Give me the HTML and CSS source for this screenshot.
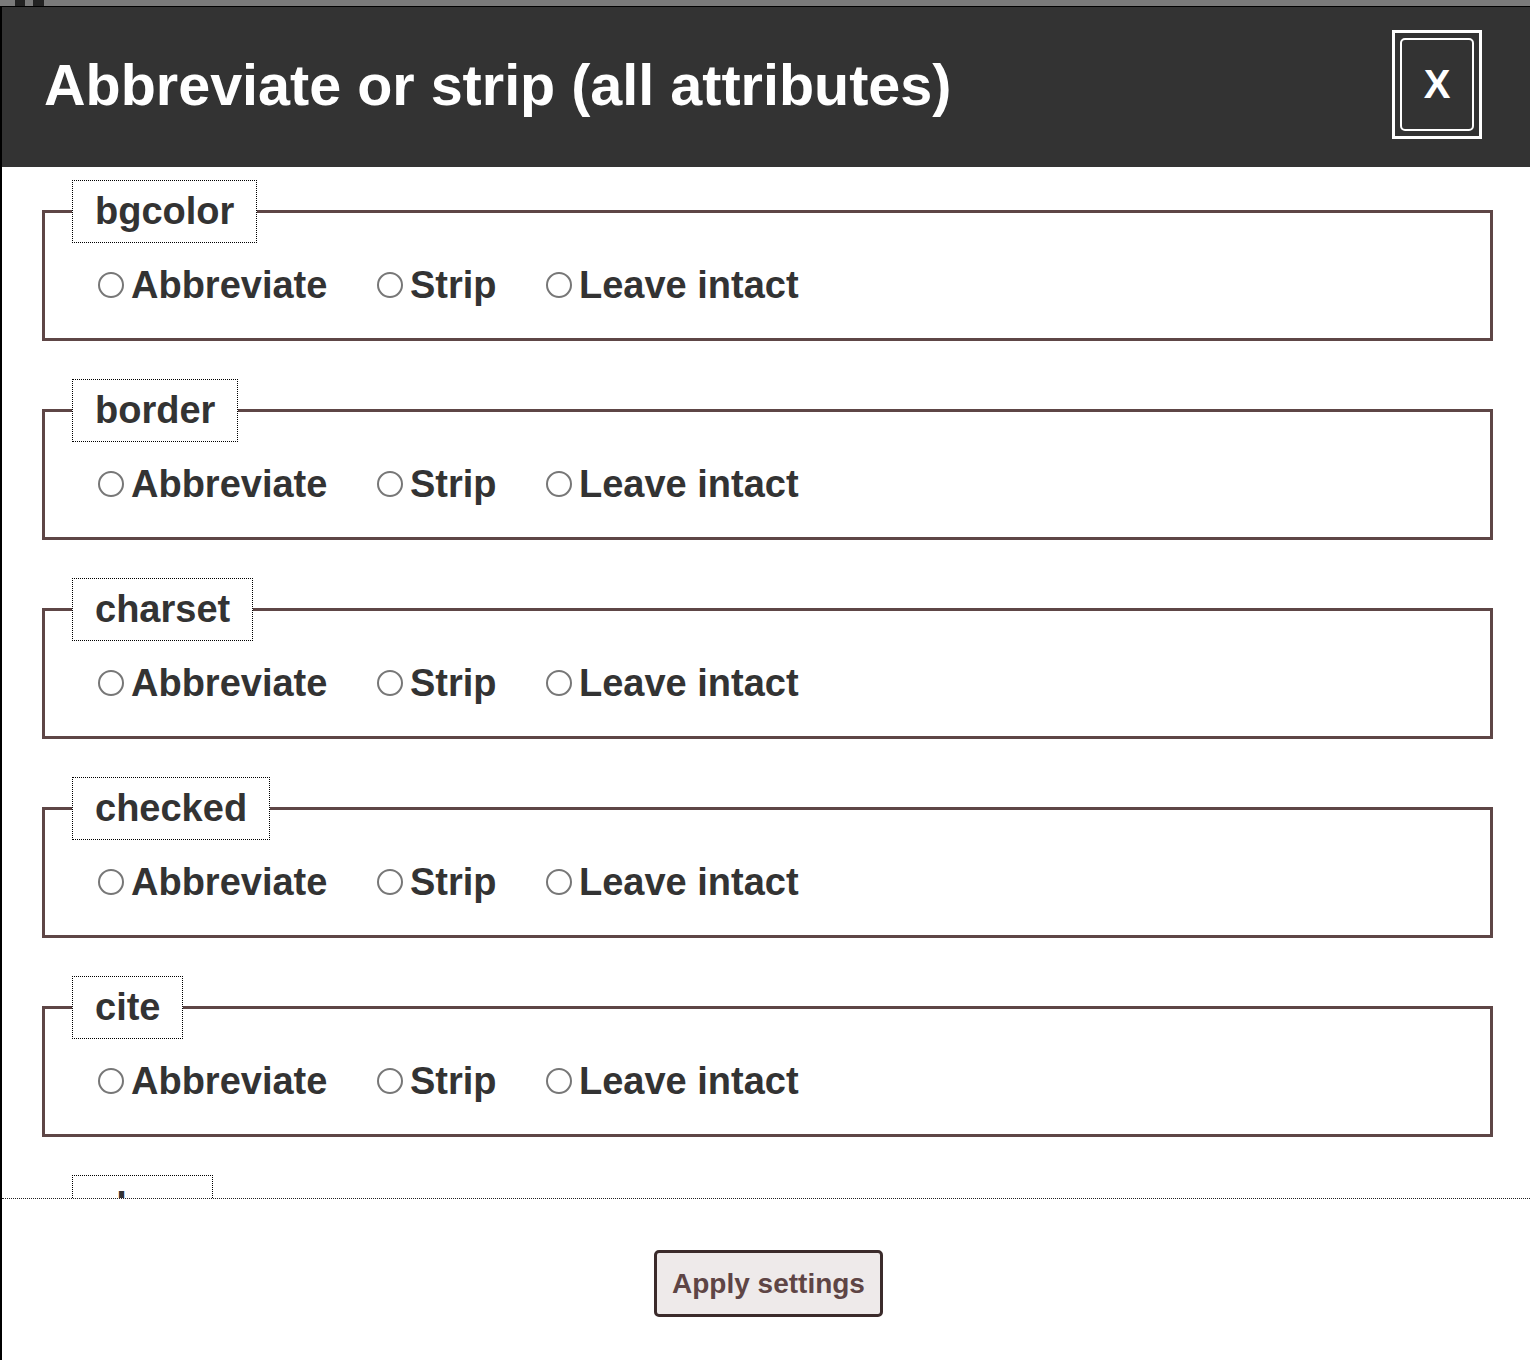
FILE: index.html
```html
<!DOCTYPE html>
<html lang="en">
<head>
<meta charset="utf-8">
<title>Abbreviate or strip (all attributes)</title>
<link rel="stylesheet" href="styles.css">
</head>
<body>
<div class="topstrip"><span class="blk blk-a"></span><span class="blk blk-b"></span></div>
<div class="dialog">
  <header class="dlg-head">
    <h1 class="dlg-title">Abbreviate or strip (all attributes)</h1>
    <button class="close" type="button"><span class="close-inner">X</span></button>
  </header>
  <div class="dlg-body">
    <fieldset class="attr">
      <legend class="attr-name">bgcolor</legend>
      <div class="opts">
        <label class="opt"><input type="radio" name="bgcolor"><span>Abbreviate</span></label>
        <label class="opt"><input type="radio" name="bgcolor"><span>Strip</span></label>
        <label class="opt"><input type="radio" name="bgcolor"><span>Leave intact</span></label>
      </div>
    </fieldset>
    <fieldset class="attr">
      <legend class="attr-name">border</legend>
      <div class="opts">
        <label class="opt"><input type="radio" name="border"><span>Abbreviate</span></label>
        <label class="opt"><input type="radio" name="border"><span>Strip</span></label>
        <label class="opt"><input type="radio" name="border"><span>Leave intact</span></label>
      </div>
    </fieldset>
    <fieldset class="attr">
      <legend class="attr-name">charset</legend>
      <div class="opts">
        <label class="opt"><input type="radio" name="charset"><span>Abbreviate</span></label>
        <label class="opt"><input type="radio" name="charset"><span>Strip</span></label>
        <label class="opt"><input type="radio" name="charset"><span>Leave intact</span></label>
      </div>
    </fieldset>
    <fieldset class="attr">
      <legend class="attr-name">checked</legend>
      <div class="opts">
        <label class="opt"><input type="radio" name="checked"><span>Abbreviate</span></label>
        <label class="opt"><input type="radio" name="checked"><span>Strip</span></label>
        <label class="opt"><input type="radio" name="checked"><span>Leave intact</span></label>
      </div>
    </fieldset>
    <fieldset class="attr">
      <legend class="attr-name">cite</legend>
      <div class="opts">
        <label class="opt"><input type="radio" name="cite"><span>Abbreviate</span></label>
        <label class="opt"><input type="radio" name="cite"><span>Strip</span></label>
        <label class="opt"><input type="radio" name="cite"><span>Leave intact</span></label>
      </div>
    </fieldset>
    <fieldset class="attr">
      <legend class="attr-name">class</legend>
      <div class="opts">
        <label class="opt"><input type="radio" name="class"><span>Abbreviate</span></label>
        <label class="opt"><input type="radio" name="class"><span>Strip</span></label>
        <label class="opt"><input type="radio" name="class"><span>Leave intact</span></label>
      </div>
    </fieldset>
  </div>
  <div class="dlg-foot">
    <button class="apply" type="button">Apply settings</button>
  </div>
</div>
</body>
</html>
```

FILE: styles.css
```css
html, body {
  margin: 0;
  padding: 0;
  background: #ffffff;
  height: 1360px;
  overflow: hidden;
}

body {
  font-family: "Liberation Sans", Arial, Helvetica, sans-serif;
  color: #333333;
}

.topstrip {
  height: 6px;
  background: #7a7a7a;
  display: flex;
}

.blk {
  display: block;
  height: 6px;
  background: #222222;
}

.blk-a {
  width: 10px;
  margin-left: 15px;
}

.blk-b {
  width: 11px;
  margin-left: 8px;
}

.dialog {
  border-top: 1px solid #000000;
  border-left: 2px solid #000000;
  height: 1353px;
  overflow: hidden;
  background: #ffffff;
}

.dlg-head {
  height: 160px;
  background: #333333;
  display: flex;
  justify-content: space-between;
  align-items: flex-start;
  padding: 0 48px 0 42px;
  box-sizing: border-box;
}

.dlg-title {
  margin: 0;
  margin-top: 45px;
  font-size: 57.5px;
  line-height: 66px;
  font-weight: bold;
  color: #ffffff;
  letter-spacing: 0;
}

.close {
  margin-top: 23px;
  width: 90px;
  height: 109px;
  border: 3px solid #ffffff;
  padding: 5px;
  background: transparent;
  box-sizing: border-box;
  font-family: inherit;
  cursor: pointer;
}

.close-inner {
  display: flex;
  align-items: center;
  justify-content: center;
  height: 100%;
  border: 2px solid #ffffff;
  border-radius: 5px;
  box-sizing: border-box;
  color: #ffffff;
  font-size: 40px;
  font-weight: bold;
}

.dlg-body {
  height: 1018px;
  overflow: hidden;
  border-bottom: 1px dotted #222222;
  padding-top: 13px;
  box-sizing: content-box;
}

.attr {
  margin: 0 37px 38px 40px;
  border: 3px solid #5e4646;
  padding: 20px 27px 31px 27px;
}

.attr-name {
  border: 1px dotted #000000;
  padding: 8px 22px;
  font-size: 38px;
  line-height: 45px;
  font-weight: bold;
  color: #333333;
}

.opts {
  display: flex;
  align-items: center;
  padding-left: 26px;
}

.opt {
  display: flex;
  align-items: center;
  margin-right: 49.5px;
  font-size: 38px;
  line-height: 44px;
  font-weight: bold;
  color: #333333;
}

.opt input {
  appearance: none;
  -webkit-appearance: none;
  width: 26px;
  height: 26px;
  margin: 0 7px 0 0;
  border: 2px solid #777777;
  border-radius: 50%;
  background: #ffffff;
  box-sizing: border-box;
}

.dlg-foot {
  padding-top: 51px;
  padding-left: 5px;
  text-align: center;
}

.apply {
  font-family: inherit;
  font-size: 28px;
  font-weight: bold;
  line-height: 33px;
  color: #5e4545;
  background: #eeeaea;
  border: 3px solid #3b2b2b;
  border-radius: 5px;
  padding: 14px 15px;
  cursor: pointer;
}
```
